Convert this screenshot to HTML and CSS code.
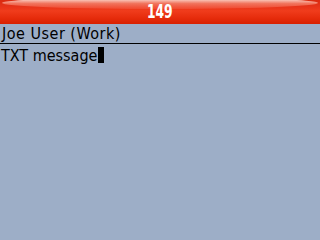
FILE: index.html
```html
<!DOCTYPE html>
<html>
<head>
<meta charset="utf-8">
<link rel="stylesheet" href="styles.css">
</head>
<body>
<div class="screen">
  <div class="titlebar"><span class="count">149</span></div>
  <div class="to">Joe User (Work)</div>
  <div class="msg"><span class="text">TXT message</span><span class="cursor"></span></div>
</div>
</body>
</html>
```
FILE: styles.css
```css
html, body { margin: 0; padding: 0; }
body { background: #9daec7; }
.screen {
  width: 320px;
  height: 240px;
  background: #9daec7;
  font-family: "DejaVu Sans Condensed", "DejaVu Sans", sans-serif;
  color: #000;
  overflow: hidden;
}
.titlebar {
  position: relative;
  height: 24px;
  background: linear-gradient(to bottom, #d92a10 0%, #e8341a 30%, #f03c1c 45%, #e62c0c 75%, #d82000 100%);
  display: flex;
  justify-content: center;
  align-items: center;
  overflow: hidden;
}
.titlebar::before {
  content: "";
  position: absolute;
  left: 2px;
  right: 2px;
  top: -3px;
  height: 12px;
  border-radius: 50%;
  background: linear-gradient(to bottom, rgba(255,225,215,0.9) 20%, rgba(255,170,150,0.55) 55%, rgba(255,110,85,0.3) 100%);
}
.count {
  position: relative;
  top: -0.5px;
  color: #fff;
  font-weight: bold;
  font-size: 19px;
  line-height: 1;
  transform: scaleX(0.72);
}
.to {
  height: 19px;
  line-height: 20px;
  font-size: 16px;
  padding-left: 2px;
  letter-spacing: 0.5px;
  border-bottom: 1px solid #000;
}
.msg {
  display: flex;
  align-items: flex-start;
  padding-top: 3px;
  font-size: 16px;
  line-height: 17px;
}
.text { padding-left: 1px; }
.cursor {
  width: 6px;
  height: 16px;
  background: #000;
  margin-left: 1px;
}
```
